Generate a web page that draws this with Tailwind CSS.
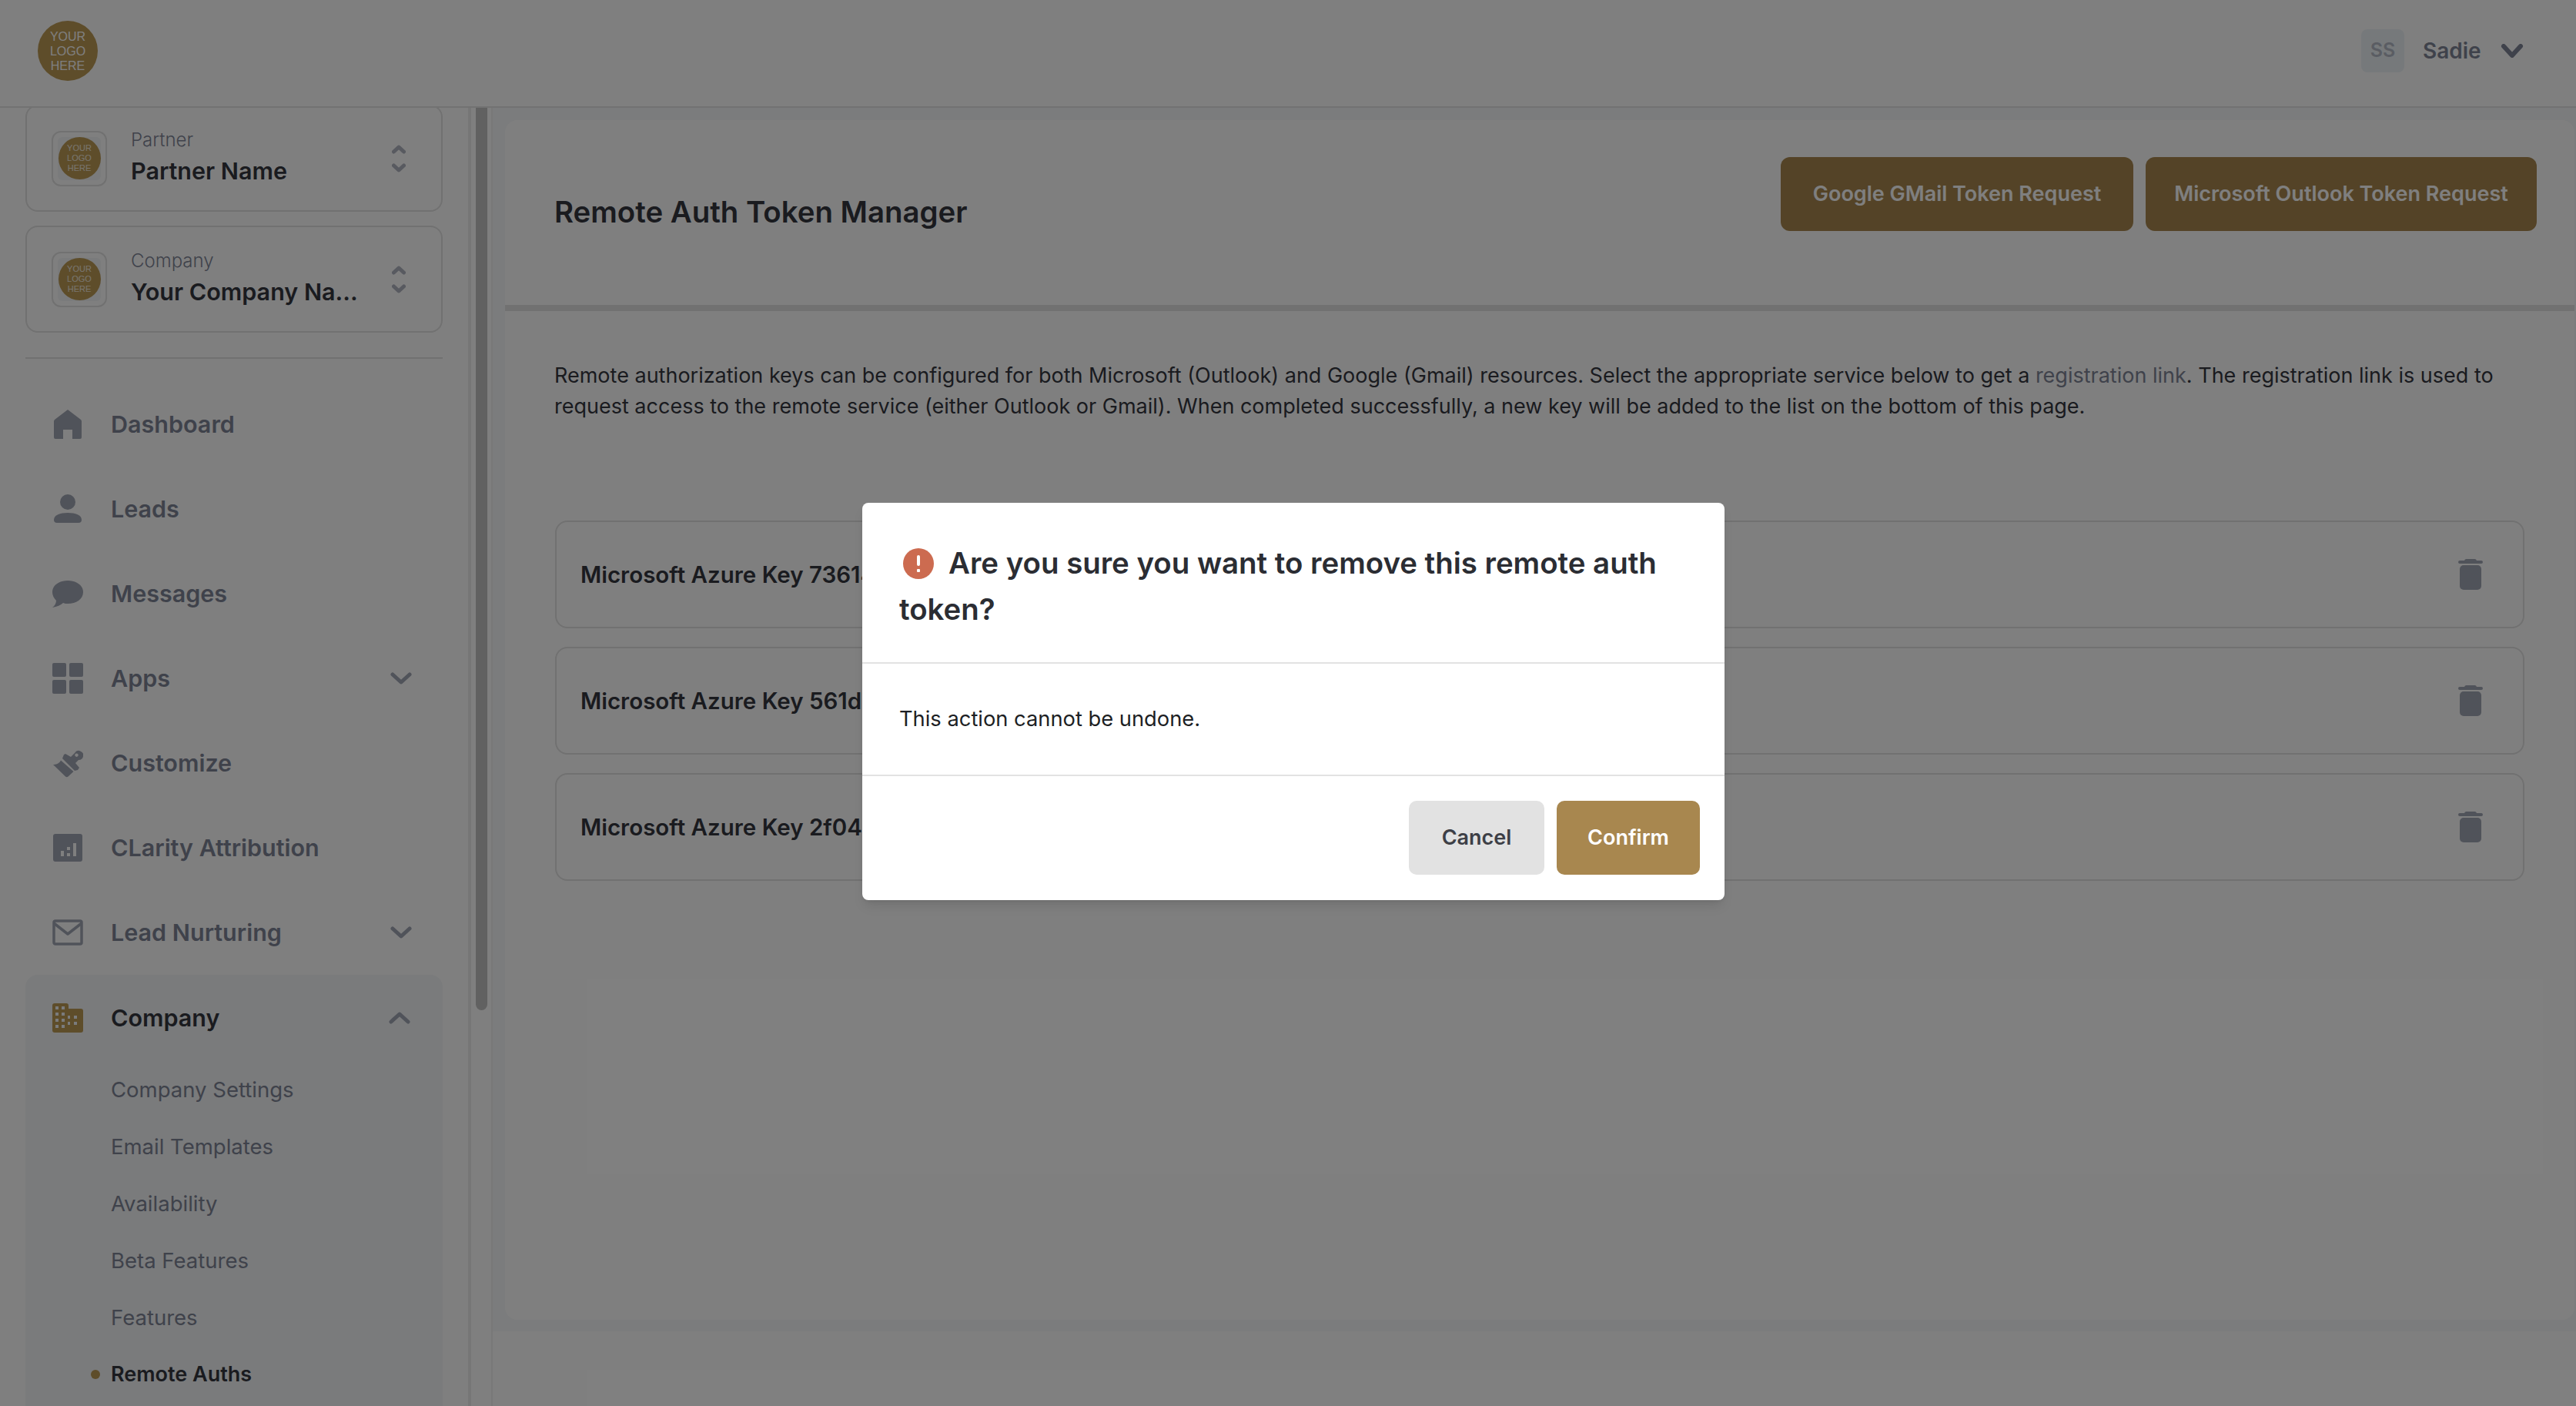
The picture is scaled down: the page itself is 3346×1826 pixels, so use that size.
<!DOCTYPE html>
<html lang="en">
<head>
    <meta charset="UTF-8">
    <title>Remote Auth Token Manager</title>
    <script src="https://cdn.jsdelivr.net/npm/@tailwindcss/browser@4"></script>
</head>
<body class="font-['Inter',sans-serif] text-[#34363f] bg-[#f5f7f9]">
<div class="relative flex flex-col w-[3346px] h-[1826px] overflow-hidden">

    <!-- Top bar -->
    <header class="flex items-center justify-between h-[140px] shrink-0 pl-[49px] pr-[68px] pb-[6px] bg-white border-b-2 border-[#e4e4e4]">
        <div class="flex flex-col items-center justify-center w-[78px] h-[78px] rounded-full bg-[#bc9a55] text-white font-['Liberation_Sans',sans-serif] text-[16px] leading-[19px]">
            <span>YOUR</span><span>LOGO</span><span>HERE</span>
        </div>
        <div class="flex items-center">
            <div class="flex items-center justify-center w-[56px] h-[56px] rounded-lg bg-[#edf2f7] text-[#b4bac6] text-[25px] font-semibold">SS</div>
            <span class="ml-[24px] w-[73px] text-[28px] font-semibold text-[#7f8596]">Sadie</span>
            <svg class="ml-[28px] w-[30px] h-[18px] text-[#7f8596]" viewBox="0 0 30 18" fill="none" stroke="currentColor" stroke-width="6" stroke-linecap="round" stroke-linejoin="round"><path d="M4 3l11 12L26 3"/></svg>
        </div>
    </header>

    <div class="flex flex-1 min-h-0">
        <!-- Sidebar -->
        <aside class="w-[612px] shrink-0 pl-[33px] pr-[33px] border-r-4 border-[#ececec] bg-white overflow-hidden">
            <div class="-mt-[4px]">
                <div class="flex items-center h-[139px] pl-[32px] pr-[46px] border-2 border-[#e2e2e2] rounded-[16px]">
                    <div class="flex items-center justify-center w-[72px] h-[72px] rounded-[12px] border-2 border-[#e2e2e2]">
                        <div class="flex items-center justify-center w-[56px] h-[56px] rounded-[6px] bg-[#f4f6f8]">
                            <div class="flex flex-col items-center justify-center w-[55px] h-[55px] rounded-full bg-[#bc9a55] text-white/80 font-['Liberation_Sans',sans-serif] text-[11px] leading-[13px]">
                                <span>YOUR</span><span>LOGO</span><span>HERE</span>
                            </div>
                        </div>
                    </div>
                    <div class="ml-[31px] flex-1 min-w-0 -mt-[3px]">
                        <div class="text-[24px] leading-[32px] font-light text-[#7f8596]">Partner</div>
                        <div class="mt-[4px] text-[30.5px] leading-[40px] font-semibold text-[#34363f]">Partner Name</div>
                    </div>
                    <svg class="w-[18px] h-[36px] text-[#b0b4c0]" viewBox="0 0 18 36" fill="none" stroke="currentColor" stroke-width="5" stroke-linecap="round" stroke-linejoin="round"><path d="M2.500 9L9 3l6.500 6M2.500 27L9 33l6.500-6"/></svg>
                </div>
                <div class="flex items-center h-[139px] mt-[18px] pl-[32px] pr-[46px] border-2 border-[#e2e2e2] rounded-[16px]">
                    <div class="flex items-center justify-center w-[72px] h-[72px] rounded-[12px] border-2 border-[#e2e2e2]">
                        <div class="flex items-center justify-center w-[56px] h-[56px] rounded-[6px] bg-[#f4f6f8]">
                            <div class="flex flex-col items-center justify-center w-[55px] h-[55px] rounded-full bg-[#bc9a55] text-white/80 font-['Liberation_Sans',sans-serif] text-[11px] leading-[13px]">
                                <span>YOUR</span><span>LOGO</span><span>HERE</span>
                            </div>
                        </div>
                    </div>
                    <div class="ml-[31px] flex-1 min-w-0 -mt-[3px]">
                        <div class="text-[24px] leading-[32px] font-light text-[#7f8596]">Company</div>
                        <div class="mt-[4px] text-[30.5px] leading-[40px] font-semibold text-[#34363f]">Your Company Na...</div>
                    </div>
                    <svg class="w-[18px] h-[36px] text-[#b0b4c0]" viewBox="0 0 18 36" fill="none" stroke="currentColor" stroke-width="5" stroke-linecap="round" stroke-linejoin="round"><path d="M2.500 9L9 3l6.500 6M2.500 27L9 33l6.500-6"/></svg>
                </div>
                <div class="mt-[32px] border-t-2 border-[#e2e2e2]"></div>

                <nav class="mt-[30px] text-[30.5px] font-semibold text-[#7f8596]">
                    <div class="flex items-center h-[110px] pl-[35px]">
                        <svg class="w-[40px] h-[40px] text-[#a1a6b4]" viewBox="0 0 40 40" fill="currentColor"><path d="M20 1L37 14a3 3 0 0 1 1 2v21a2 2 0 0 1-2 2H26V27H14v12H4a2 2 0 0 1-2-2V16a3 3 0 0 1 1-2z"/></svg>
                        <span class="ml-[36px]">Dashboard</span>
                    </div>
                    <div class="flex items-center h-[110px] pl-[35px]">
                        <svg class="w-[40px] h-[40px] text-[#a1a6b4]" viewBox="0 0 40 40" fill="currentColor"><circle cx="20" cy="11" r="10"/><path d="M2 34c0-6 8-9 18-9s18 3 18 9a4 4 0 0 1-4 4H6a4 4 0 0 1-4-4z"/></svg>
                        <span class="ml-[36px]">Leads</span>
                    </div>
                    <div class="flex items-center h-[110px] pl-[35px]">
                        <svg class="w-[40px] h-[40px] text-[#a1a6b4]" viewBox="0 0 40 40" fill="currentColor"><path d="M20 3c11 0 20 6 20 15s-9 15-20 15c-2 0-4 0-6-1-3 3-8 5-14 6 3-2 5-6 5-9-3-3-5-7-5-11C0 9 9 3 20 3z"/></svg>
                        <span class="ml-[36px]">Messages</span>
                    </div>
                    <div class="flex items-center h-[110px] pl-[35px]">
                        <svg class="w-[40px] h-[40px] text-[#a1a6b4]" viewBox="0 0 40 40" fill="currentColor"><rect width="18" height="18" rx="2"/><rect x="22" width="18" height="18" rx="2"/><rect y="22" width="18" height="18" rx="2"/><rect x="22" y="22" width="18" height="18" rx="2"/></svg>
                        <span class="ml-[36px]">Apps</span>
                        <svg class="ml-auto mr-[40px] w-[28px] h-[18px] text-[#a1a6b4]" viewBox="0 0 28 18" fill="none" stroke="currentColor" stroke-width="5" stroke-linecap="round" stroke-linejoin="round"><path d="M3 4l11 10L25 4"/></svg>
                    </div>
                    <div class="flex items-center h-[110px] pl-[35px]">
                        <svg class="w-[40px] h-[40px] text-[#a1a6b4]" viewBox="0 0 40 40" fill="currentColor" fill-rule="evenodd"><path d="M15 9l2-1 7 4 5-5a6 6 0 1 1 5 9l-4 4 5 6-2 3-4 1L13 14zM31.500 7.500a2.200 2.200 0 1 0 .01 0z"/><path d="M11 16.500L27.500 31l-7 6.500a3 3 0 0 1-3.500 0L1 22c3 0 8-1 10-5.500z"/></svg>
                        <span class="ml-[36px]">Customize</span>
                    </div>
                    <div class="flex items-center h-[110px] pl-[35px]">
                        <svg class="w-[40px] h-[40px] text-[#a1a6b4]" viewBox="0 0 40 40" fill="currentColor" fill-rule="evenodd"><path d="M4 2h32a3 3 0 0 1 3 3v30a3 3 0 0 1-3 3H4a3 3 0 0 1-3-3V5a3 3 0 0 1 3-3zM11 24v7h4v-7zM19 27v4h4v-4zM19 19v4h4v-4zM27 14v17h4V14z"/></svg>
                        <span class="ml-[36px]">CLarity Attribution</span>
                    </div>
                    <div class="flex items-center h-[110px] pl-[35px]">
                        <svg class="w-[40px] h-[40px] text-[#a1a6b4]" viewBox="0 0 40 40" fill="none" stroke="currentColor" stroke-width="3.500" stroke-linejoin="round"><rect x="2" y="5" width="36" height="30" rx="2"/><path d="M2 8l18 14L38 8"/></svg>
                        <span class="ml-[36px]">Lead Nurturing</span>
                        <svg class="ml-auto mr-[40px] w-[28px] h-[18px] text-[#a1a6b4]" viewBox="0 0 28 18" fill="none" stroke="currentColor" stroke-width="5" stroke-linecap="round" stroke-linejoin="round"><path d="M3 4l11 10L25 4"/></svg>
                    </div>

                    <!-- Open group -->
                    <div class="rounded-t-[16px] bg-[#f4f6f8] h-[600px]">
                        <div class="flex items-center h-[112px] pl-[35px] text-[#34363f]">
                            <svg class="w-[40px] h-[40px] text-[#bc9a55]" viewBox="0 0 40 40" fill="currentColor" fill-rule="evenodd"><path d="M3 1h15a3 3 0 0 1 3 3v4h16a3 3 0 0 1 3 3v25a3 3 0 0 1-3 3H3a3 3 0 0 1-3-3V4a3 3 0 0 1 3-3zM4 5v4h4V5zM12 5v4h4V5zM4 13v4h4v-4zM12 13v4h4v-4zM4 21v4h4v-4zM12 21v4h4v-4zM4 29v4h4v-4zM12 29v4h4v-4zM20 17v4h3v-4zM20 25v4h3v-4zM28 17v4h4v-4zM28 25v4h4v-4z"/></svg>
                            <span class="ml-[36px]">Company</span>
                            <svg class="ml-auto mr-[42px] w-[28px] h-[18px] text-[#a1a6b4]" viewBox="0 0 28 18" fill="none" stroke="currentColor" stroke-width="5" stroke-linecap="round" stroke-linejoin="round"><path d="M3 14L14 4l11 10"/></svg>
                        </div>
                        <ul class="pl-[111px] text-[27.5px] font-normal leading-[74px] text-[#7f8596]">
                            <li>Company Settings</li>
                            <li>Email Templates</li>
                            <li>Availability</li>
                            <li>Beta Features</li>
                            <li>Features</li>
                            <li class="relative font-semibold text-[27px] text-[#34363f]">
                                <span class="absolute left-[-26px] top-[31px] w-[12px] h-[12px] rounded-full bg-[#bc9a55]"></span>Remote Auths
                            </li>
                        </ul>
                    </div>
                </nav>
            </div>
        </aside>

        <!-- Scroll track -->
        <div class="w-[28px] shrink-0 pl-[6px] bg-white border-r-2 border-[#f0f0f0]">
            <div class="w-[15px] h-[1172px] rounded-b-full bg-[#c2c2c2]"></div>
        </div>

        <!-- Main -->
        <main class="flex-1 min-w-0 flex flex-col bg-white">
            <div class="h-[1589px] pt-[16px] pl-[16px] pr-[2px] bg-[#f6f8fa]">
                <div class="h-[1558px] bg-white rounded-[16px]">
                    <div class="flex items-center justify-between h-[248px] pl-[64px] pr-[49px] border-b-8 border-[#e2e2e2]">
                        <h1 class="text-[38.4px] font-semibold text-[#34363f]">Remote Auth Token Manager</h1>
                        <div class="flex gap-[16px] -mt-[48px]">
                            <button class="h-[96px] w-[458px] rounded-[12px] bg-[#a8874f] text-white text-[27px] font-semibold">Google GMail Token Request</button>
                            <button class="h-[96px] w-[508px] rounded-[12px] bg-[#a8874f] text-white text-[27px] font-semibold">Microsoft Outlook Token Request</button>
                        </div>
                    </div>
                    <p class="mt-[64px] pl-[64px] text-[27px] leading-[40px] text-[#34363f]">Remote authorization keys can be configured for both Microsoft (Outlook) and Google (Gmail) resources. Select the appropriate service below to get a <a class="text-[#7f8596]">registration link</a>. The registration link is used to<br>request access to the remote service (either Outlook or Gmail). When completed successfully, a new key will be added to the list on the bottom of this page.</p>
                    <div class="mt-[128px] pl-[65px] pr-[65px] flex flex-col gap-[24px]">
                        <div class="flex items-center justify-between h-[140px] pl-[31px] pr-[52px] border-2 border-[#e2e2e2] rounded-[16px]">
                            <span class="text-[29.5px] font-semibold text-[#34363f]">Microsoft Azure Key 73614</span>
                            <svg class="w-[32px] h-[40px] text-[#a1a6b4]" viewBox="0 0 32 40" fill="currentColor"><path d="M11 0h10a3 3 0 0 1 3 2h6a2 2 0 0 1 0 4H2a2 2 0 0 1 0-4h6a3 3 0 0 1 3-2z"/><rect x="2" y="8" width="28" height="32" rx="5"/></svg>
                        </div>
                        <div class="flex items-center justify-between h-[140px] pl-[31px] pr-[52px] border-2 border-[#e2e2e2] rounded-[16px]">
                            <span class="text-[29.5px] font-semibold text-[#34363f]">Microsoft Azure Key 561d7</span>
                            <svg class="w-[32px] h-[40px] text-[#a1a6b4]" viewBox="0 0 32 40" fill="currentColor"><path d="M11 0h10a3 3 0 0 1 3 2h6a2 2 0 0 1 0 4H2a2 2 0 0 1 0-4h6a3 3 0 0 1 3-2z"/><rect x="2" y="8" width="28" height="32" rx="5"/></svg>
                        </div>
                        <div class="flex items-center justify-between h-[140px] pl-[31px] pr-[52px] border-2 border-[#e2e2e2] rounded-[16px]">
                            <span class="text-[29.5px] font-semibold text-[#34363f]">Microsoft Azure Key 2f04</span>
                            <svg class="w-[32px] h-[40px] text-[#a1a6b4]" viewBox="0 0 32 40" fill="currentColor"><path d="M11 0h10a3 3 0 0 1 3 2h6a2 2 0 0 1 0 4H2a2 2 0 0 1 0-4h6a3 3 0 0 1 3-2z"/><rect x="2" y="8" width="28" height="32" rx="5"/></svg>
                        </div>
                    </div>
                </div>
            </div>
        </main>
    </div>

    <!-- Modal overlay -->
    <div class="absolute inset-0 bg-black/50 flex justify-center items-start pt-[653px] pl-[14px]">
        <div class="w-[1120px] h-[516px] bg-white rounded-[8px] shadow-lg">
            <div class="h-[209px] px-[48px] pt-[48px] border-b-2 border-[#e2e2e2]">
                <h2 class="text-[38.4px] leading-[60px] font-semibold text-[#2b2d33]">
                    <svg class="inline-block align-[-7px] ml-[5px] mr-[19px] w-[40px] h-[40px]" viewBox="0 0 40 40"><circle cx="20" cy="20" r="20" fill="#cc6b50"/><rect x="18" y="9" width="4" height="14" rx="2" fill="#fff"/><rect x="18" y="27" width="4" height="4" rx="1" fill="#fff"/></svg>Are you sure you want to remove this remote auth token?
                </h2>
            </div>
            <div class="flex items-center h-[146px] px-[48px] border-b-2 border-[#e2e2e2] text-[27.3px] text-[#1d1f24]">This action cannot be undone.</div>
            <div class="flex justify-end gap-[16px] pt-[32px] pr-[32px]">
                <button class="w-[176px] h-[96px] rounded-[10px] bg-[#e2e2e2] text-[#3d3f46] text-[27px] font-semibold">Cancel</button>
                <button class="w-[186px] h-[96px] rounded-[10px] bg-[#a8874f] text-white text-[27px] font-semibold">Confirm</button>
            </div>
        </div>
    </div>
</div>
</body>
</html>
